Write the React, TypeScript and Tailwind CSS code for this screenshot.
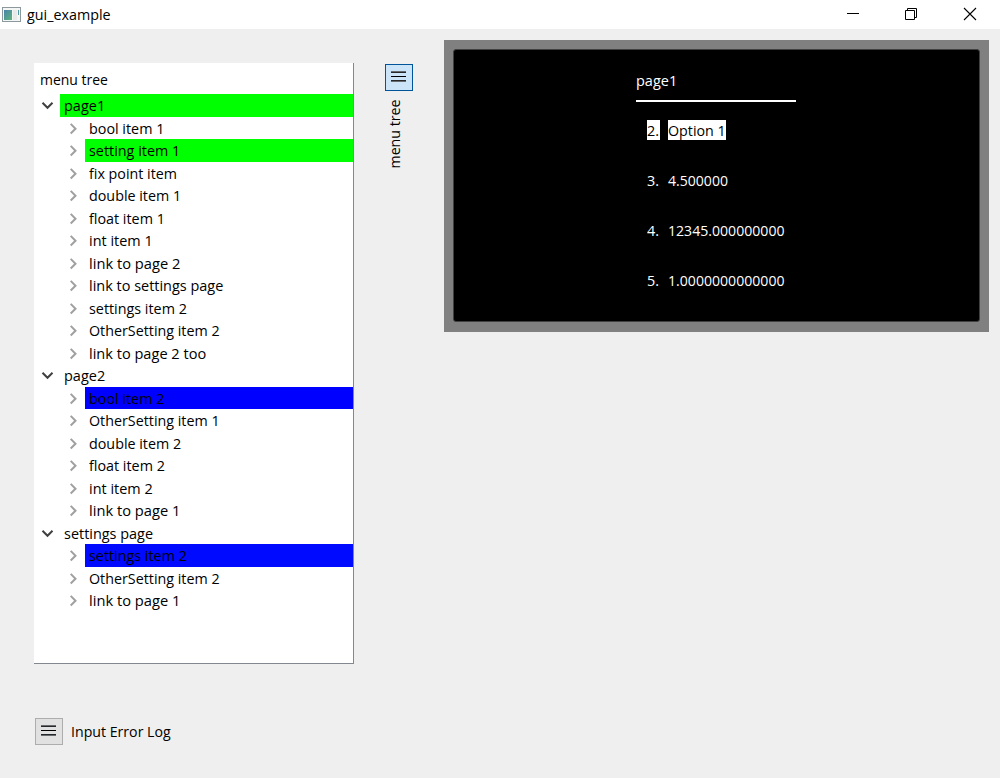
import { useLayoutEffect, useRef } from "react";

/** Text that is condensed horizontally so that it occupies exactly `width` pixels. */
function Label({ text, width, className = "" }: { text: string; width: number; className?: string }) {
  const ref = useRef<HTMLSpanElement>(null);
  useLayoutEffect(() => {
    const fit = () => {
      const el = ref.current;
      if (!el || !el.offsetWidth) return;
      el.style.transform = `scaleX(${width / el.offsetWidth})`;
    };
    fit();
    document.fonts.ready.then(fit);
  }, [text, width]);
  return (
    <span className={`block shrink-0 whitespace-pre ${className}`} style={{ width }}>
      <span ref={ref} className="inline-block origin-left">
        {text}
      </span>
    </span>
  );
}

type Mark = "green" | "blue" | "blue2";
type Item = { text: string; width: number; mark?: Mark };
type Page = Item & { children: Item[] };

const markClass: Record<Mark, string> = {
  green: "bg-[#00ff00]",
  blue: "bg-[#0000ff]",
  blue2: "bg-[#000aff]",
};

const pages: Page[] = [
  {
    text: "page1",
    width: 41.5,
    mark: "green",
    children: [
      { text: "bool item 1", width: 75.5 },
      { text: "setting item 1", width: 91, mark: "green" },
      { text: "fix point item", width: 87.5 },
      { text: "double item 1", width: 92.5 },
      { text: "float item 1", width: 75.5 },
      { text: "int item 1", width: 63.5 },
      { text: "link to page 2", width: 91 },
      { text: "link to settings page", width: 134 },
      { text: "settings item 2", width: 97.5 },
      { text: "OtherSetting item 2", width: 130.5 },
      { text: "link to page 2 too", width: 117.5 },
    ],
  },
  {
    text: "page2",
    width: 41.5,
    children: [
      { text: "bool item 2", width: 75.5, mark: "blue" },
      { text: "OtherSetting item 1", width: 130.5 },
      { text: "double item 2", width: 92.5 },
      { text: "float item 2", width: 75.5 },
      { text: "int item 2", width: 63.5 },
      { text: "link to page 1", width: 91 },
    ],
  },
  {
    text: "settings page",
    width: 89.5,
    children: [
      { text: "settings item 2", width: 97.5, mark: "blue2" },
      { text: "OtherSetting item 2", width: 130.5 },
      { text: "link to page 1", width: 91 },
    ],
  },
];

function TreeRow({ item, open }: { item: Item; open: boolean }) {
  return (
    <div className={`flex h-[22.5px] ${open ? "" : "pl-[25px]"}`}>
      <div className="w-[26px] shrink-0">
        <svg width="26" height="22" viewBox="0 0 26 22" fill="none">
          {open ? (
            <path d="M8.5 8.8 L13.5 13.8 L18.5 8.8" stroke="#404040" strokeWidth="2" />
          ) : (
            <path d="M11.7 6.9 L16.5 11.7 L11.7 16.5" stroke="#a0a0a0" strokeWidth="2" />
          )}
        </svg>
      </div>
      <div className={`flex flex-1 items-center pl-[3.6px] ${item.mark ? markClass[item.mark] : ""}`}>
        <Label text={item.text} width={item.width} className="leading-[22px]" />
      </div>
    </div>
  );
}

function Burger() {
  return (
    <svg className="-mt-px" width="16" height="12" viewBox="0 0 16 12" shapeRendering="crispEdges">
      <rect x="0" y="0" width="15" height="1" fill="#666b70" />
      <rect x="0" y="1" width="15" height="1" fill="#282828" />
      <rect x="0" y="5" width="15" height="1" fill="#000" />
      <rect x="0" y="9" width="15" height="1" fill="#282828" />
      <rect x="0" y="10" width="15" height="1" fill="#666b70" />
    </svg>
  );
}

const values = [
  { no: "2.", text: "Option 1", width: 58, selected: true },
  { no: "3.", text: "4.500000", width: 60 },
  { no: "4.", text: "12345.000000000", width: 116.5 },
  { no: "5.", text: "1.0000000000000", width: 116.5 },
];

export default function App() {
  return (
    <div className="flex h-[778px] w-[1000px] flex-col overflow-hidden bg-[#efefef] font-['Open_Sans','Noto_Sans',sans-serif] text-[15px] text-black">
      <header className="flex h-[29px] shrink-0 items-center bg-white">
        <svg className="ml-[2px] -mt-px shrink-0" width="19" height="15" viewBox="0 0 19 15">
          <defs>
            <linearGradient id="pane" x1="0" y1="0" x2="1" y2="1">
              <stop offset="0" stopColor="#4b83ad" />
              <stop offset="1" stopColor="#5db57a" />
            </linearGradient>
          </defs>
          <rect x="0.5" y="0.5" width="18" height="14" fill="#f4f6f6" stroke="#8c979e" />
          <rect x="2" y="3" width="8" height="10" fill="url(#pane)" />
          <rect x="11" y="3" width="4" height="10" fill="#e8eaea" />
          <rect x="16" y="3" width="1" height="5" fill="#4f9aa5" />
        </svg>
        <Label text="gui_example" width={84} className="ml-[6px]" />
        <div className="flex-1" />
        <svg width="153" height="29" viewBox="0 0 153 29" fill="none" stroke="#000">
          <path d="M0 13.5H12" />
          <path d="M58.5 10.5H67.5V19.5H58.5ZM60.5 10.5V8.5H69.5V17.5H67.5" />
          <path d="M117 8L129 20M129 8L117 20" strokeWidth="1.1" />
        </svg>
      </header>

      <div className="flex pl-[34px]">
        <main className="mt-[34px] h-[601px] w-[320px] shrink-0 border-r border-b border-[#828790] bg-white">
          <div className="flex h-[31px] items-center pt-px pl-[6px]">
            <Label text="menu tree" width={68} />
          </div>
          {pages.map((page) => (
            <div key={page.text}>
              <TreeRow item={page} open />
              {page.children.map((child) => (
                <TreeRow key={child.text} item={child} open={false} />
              ))}
            </div>
          ))}
        </main>

        <aside className="mt-[35px] ml-[31px] flex w-7 shrink-0 flex-col items-center">
          <button className="flex h-[27px] w-7 items-center justify-center border border-[#005499] bg-[#cce4f7]">
            <Burger />
          </button>
          <div className="mt-[8px] mr-[12px] flex h-[70px] w-5 items-center justify-center">
            <Label text="menu tree" width={69} className="-rotate-90 leading-5" />
          </div>
        </aside>

        <section className="mt-[11px] ml-[31px] h-[292px] w-[545px] border-[9px] border-[#808080] bg-[#808080]">
          <div className="h-[273px] w-[527px] rounded-[3px] border border-[#404040] bg-black pt-[19px] pl-[182px] text-white">
            <div className="flex h-[33px] w-[160px] border-b-2 border-white">
              <Label text="page1" width={41.5} className="leading-[22px]" />
            </div>
            <div className="mt-[18px] flex flex-col gap-[30px] pl-[11px]">
              {values.map((v) => (
                <div key={v.no} className={`flex h-5 gap-2 leading-5 ${v.selected ? "text-black" : ""}`}>
                  <div className={v.selected ? "w-[13px] bg-white" : "w-[13px]"}>
                    <Label text={v.no} width={12.5} />
                  </div>
                  <div className={v.selected ? "bg-white" : ""}>
                    <Label text={v.text} width={v.width} />
                  </div>
                </div>
              ))}
            </div>
          </div>
        </section>
      </div>

      <footer className="mt-[54px] flex h-[27px] items-center pl-[35px]">
        <button className="flex h-[27px] w-7 items-center justify-center border border-[#adadad] bg-[#e1e1e1]">
          <Burger />
        </button>
        <Label text="Input Error Log" width={100} className="ml-[7.5px]" />
      </footer>
    </div>
  );
}
